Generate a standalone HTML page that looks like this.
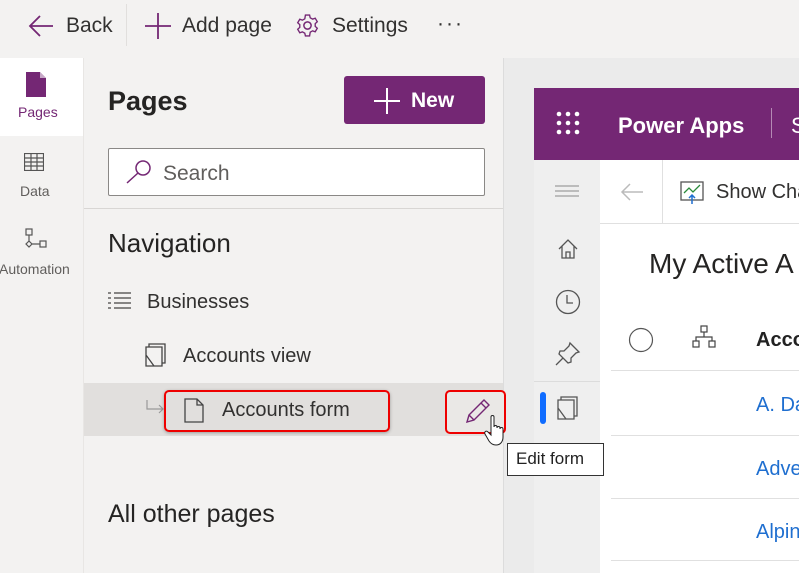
<!DOCTYPE html><html><head><style>
*{margin:0;padding:0;box-sizing:border-box}
body{width:799px;height:573px;overflow:hidden;background:#f3f2f1;font-family:"Liberation Sans",sans-serif;position:relative;color:#323130}
.a{position:absolute}
.t{font-size:21px;color:#323130;white-space:nowrap}
.z{z-index:5}
</style></head><body>
<!-- top bar -->
<div class="a" style="left:0;top:0;width:799px;height:58px;background:#f3f2f1"></div>
<svg class="a" style="left:28px;top:14px" width="26" height="24" viewBox="0 0 26 24"><path d="M25 12H3M12 2L2 12l10 10" stroke="#742774" stroke-width="1.8" fill="none"/></svg>
<div class="a t" style="left:66px;top:14px">Back</div>
<div class="a" style="left:126px;top:4px;width:1px;height:42px;background:#e1dfdd"></div>
<svg class="a" style="left:145px;top:13px" width="26" height="26"><path d="M13 0v26M0 13h26" stroke="#742774" stroke-width="1.8"/></svg>
<div class="a t" style="left:182px;top:14px">Add page</div>
<svg class="a" style="left:295px;top:13px" width="25" height="25" viewBox="0 0 24 24"><circle cx="12" cy="12" r="3.5" fill="none" stroke="#742774" stroke-width="1.4"/><path d="M10 2h4l.6 2.6 2.3 1.3 2.5-.9 2 3.4-2 1.8v2.6l2 1.8-2 3.4-2.5-.9-2.3 1.3L14 22h-4l-.6-2.6-2.3-1.3-2.5.9-2-3.4 2-1.8v-2.6l-2-1.8 2-3.4 2.5.9 2.3-1.3z" fill="none" stroke="#742774" stroke-width="1.3"/></svg>
<div class="a t" style="left:332px;top:14px">Settings</div>
<div class="a t" style="left:437px;top:12px;letter-spacing:2px">···</div>
<!-- left rail -->
<div class="a" style="left:0;top:58px;width:83px;height:78px;background:#fff"></div>
<svg class="a" style="left:26px;top:72px" width="20" height="25"><path d="M0 0h14l6 6v19H0z" fill="#742774"/><path d="M14 0v6h6" fill="#fff" opacity=".6"/></svg>
<div class="a" style="left:18px;top:104px;font-size:14px;color:#742774">Pages</div>
<svg class="a" style="left:24px;top:153px" width="20" height="18"><g stroke="#555" fill="none" stroke-width="1.2"><rect x=".5" y=".5" width="19" height="17"/><path d="M0 5h20M0 9h20M0 13h20M7 0v18M13 0v18"/></g></svg>
<div class="a" style="left:20px;top:183px;font-size:14px;color:#605e5c">Data</div>
<svg class="a" style="left:24px;top:228px" width="24" height="22"><g stroke="#555" fill="none" stroke-width="1.2"><rect x="2" y="1" width="6" height="6"/><path d="M5 7v6l3 3-3 3-3-3 3-3M8 16h8"/><rect x="16" y="13" width="6" height="6"/></g></svg>
<div class="a" style="left:-1px;top:261px;font-size:14px;color:#605e5c">Automation</div>
<!-- panel -->
<div class="a" style="left:83px;top:58px;width:1px;height:515px;background:#e8e6e4"></div>
<div class="a" style="left:108px;top:86px;font-size:27px;font-weight:bold;color:#252423">Pages</div>
<div class="a" style="left:344px;top:76px;width:141px;height:48px;background:#742774;border-radius:3px"></div>
<svg class="a" style="left:374px;top:88px" width="26" height="26"><path d="M13 0v26M0 13h26" stroke="#fff" stroke-width="2"/></svg>
<div class="a" style="left:411px;top:89px;font-size:21px;font-weight:bold;color:#fff">New</div>
<div class="a" style="left:108px;top:148px;width:377px;height:48px;background:#fff;border:1px solid #8a8886;border-radius:2px"></div>
<svg class="a" style="left:126px;top:160px" width="26" height="24"><circle cx="17" cy="8" r="7" fill="none" stroke="#742774" stroke-width="1.5"/><path d="M12 13L1 23" stroke="#742774" stroke-width="1.5"/></svg>
<div class="a t" style="left:163px;top:162px;color:#605e5c">Search</div>
<div class="a" style="left:84px;top:208px;width:419px;height:1px;background:#d8d6d4"></div>
<div class="a" style="left:108px;top:228px;font-size:26px;color:#252423">Navigation</div>
<svg class="a" style="left:108px;top:292px" width="24" height="18"><g stroke="#444" stroke-width="1.3"><path d="M0 1h3M0 6h3M0 11h3M0 16h3M6 1h17M6 6h17M6 11h17M6 16h17"/></g></svg>
<div class="a t" style="left:147px;top:291px;font-size:20px">Businesses</div>
<svg class="a" style="left:145px;top:343px" width="22" height="24"><g stroke="#444" fill="none" stroke-width="1.3"><path d="M4 4V1h16v19h-3"/><path d="M1 4h16v19H1zM1 12l8 11"/></g></svg>
<div class="a t" style="left:183px;top:345px;font-size:20px">Accounts view</div>
<div class="a" style="left:84px;top:383px;width:419px;height:53px;background:#e1dfdd"></div>
<svg class="a" style="left:146px;top:400px" width="20" height="16"><path d="M1 0v9h16M13 5l4 4-4 4" stroke="#999" fill="none" stroke-width="1.2"/></svg>
<div class="a" style="left:164px;top:390px;width:226px;height:42px;border:2px solid #e00;border-radius:5px;box-shadow:0 1px 3px rgba(0,0,0,.3)"></div>
<svg class="a" style="left:184px;top:398px" width="20" height="25"><path d="M1 1h12l6 6v17H1z M13 1v6h6" stroke="#444" fill="none" stroke-width="1.3"/></svg>
<div class="a t" style="left:222px;top:399px;font-size:20px">Accounts form</div>
<div class="a" style="left:108px;top:500px;font-size:25px;color:#252423">All other pages</div>
<!-- right preview -->
<div class="a" style="left:503px;top:58px;width:296px;height:515px;background:#ebebeb"></div>
<div class="a" style="left:503px;top:58px;width:1px;height:515px;background:#dcdcdc"></div>
<div class="a" style="left:534px;top:88px;width:265px;height:72px;background:#742774"></div>
<svg class="a" style="left:556px;top:111px" width="26" height="24"><g fill="#fff"><circle cx="3" cy="3" r="2.3"/><circle cx="12" cy="3" r="2.3"/><circle cx="21" cy="3" r="2.3"/><circle cx="3" cy="12" r="2.3"/><circle cx="12" cy="12" r="2.3"/><circle cx="21" cy="12" r="2.3"/><circle cx="3" cy="21" r="2.3"/><circle cx="12" cy="21" r="2.3"/><circle cx="21" cy="21" r="2.3"/></g></svg>
<div class="a" style="left:618px;top:113px;font-size:22px;font-weight:bold;color:#fff">Power Apps</div>
<div class="a" style="left:771px;top:108px;width:1px;height:30px;background:#b48ab4"></div>
<div class="a" style="left:791px;top:113px;font-size:22px;color:#fff">S</div>
<div class="a" style="left:534px;top:160px;width:66px;height:413px;background:#efefef"></div>
<div class="a" style="left:600px;top:160px;width:199px;height:413px;background:#fff"></div>
<div class="a" style="left:600px;top:223px;width:199px;height:1px;background:#e0e0e0"></div>
<div class="a" style="left:662px;top:160px;width:1px;height:63px;background:#e0e0e0"></div>
<svg class="a" style="left:555px;top:185px" width="24" height="12"><path d="M0 1h24M0 6h24M0 11h24" stroke="#888" stroke-width="1"/></svg>
<svg class="a" style="left:620px;top:182px" width="24" height="20"><path d="M23 10H2M10 2L2 10l8 8" stroke="#bbb" fill="none" stroke-width="1.5"/></svg>
<svg class="a" style="left:680px;top:181px" width="26" height="24"><rect x="1" y="1" width="22" height="18" fill="none" stroke="#555" stroke-width="1.3"/><path d="M4 12l5-5 4 4 7-7" stroke="#2a8a3a" fill="none" stroke-width="1.3"/><path d="M12 23v-9M9 17l3-3 3 3" stroke="#1f6fd0" fill="none" stroke-width="1.5"/></svg>
<div class="a t" style="left:716px;top:181px;font-size:20px">Show Cha</div>
<svg class="a" style="left:557px;top:238px" width="22" height="22"><path d="M2 11L11 2l9 9M5 8v12h12V8M9 20v-6h4v6" stroke="#555" fill="none" stroke-width="1.3"/></svg>
<svg class="a" style="left:555px;top:289px" width="26" height="26"><circle cx="13" cy="13" r="11.5" fill="none" stroke="#555" stroke-width="1.3"/><path d="M12 6v8h6" stroke="#555" fill="none" stroke-width="1.3"/></svg>
<svg class="a" style="left:555px;top:341px" width="26" height="26"><path d="M15 2l9 9-3 1-5 5 0 4-3 1-9-9 1-3 4 0 5-5zM8 17l-7 7" stroke="#555" fill="none" stroke-width="1.3"/></svg>
<div class="a" style="left:534px;top:381px;width:66px;height:1px;background:#dcdcdc"></div>
<div class="a" style="left:540px;top:392px;width:6px;height:32px;background:#0f6cff;border-radius:3px"></div>
<svg class="a" style="left:557px;top:396px" width="22" height="24"><g stroke="#555" fill="none" stroke-width="1.3"><path d="M4 4V1h16v19h-3"/><path d="M1 4h16v19H1zM1 12l8 11"/></g></svg>
<div class="a" style="left:649px;top:248px;font-size:28px;color:#252423">My Active A</div>
<svg class="a" style="left:628px;top:327px" width="26" height="26"><circle cx="13" cy="13" r="11.5" fill="none" stroke="#555" stroke-width="1.2"/></svg>
<svg class="a" style="left:692px;top:325px" width="25" height="24"><g stroke="#444" fill="none" stroke-width="1.2"><rect x="9" y="1" width="6" height="6"/><rect x="1" y="16" width="6" height="6"/><rect x="17" y="16" width="6" height="6"/><path d="M12 7v5M4 16v-4h16v4"/></g></svg>
<div class="a t" style="left:756px;top:329px;font-size:20px;font-weight:bold;color:#222">Acco</div>
<div class="a" style="left:611px;top:370px;width:188px;height:1px;background:#e0e0e0"></div>
<div class="a" style="left:611px;top:435px;width:188px;height:1px;background:#e0e0e0"></div>
<div class="a" style="left:611px;top:498px;width:188px;height:1px;background:#e0e0e0"></div>
<div class="a" style="left:611px;top:560px;width:188px;height:1px;background:#e0e0e0"></div>
<div class="a t" style="left:756px;top:394px;font-size:20px;color:#1f6fd0">A. Da</div>
<div class="a t" style="left:756px;top:458px;font-size:20px;color:#1f6fd0">Adve</div>
<div class="a t" style="left:756px;top:521px;font-size:20px;color:#1f6fd0">Alpin</div>
<!-- overlay -->
<div class="a z" style="left:445px;top:390px;width:61px;height:44px;border:2px solid #e00;border-radius:5px;background:#eae8e6"></div>
<svg class="a z" style="left:465px;top:398px" width="26" height="26"><path d="M2 24l2-7L19 2l5 5L9 22zM4 17l5 5M16 5l5 5" stroke="#742774" fill="none" stroke-width="1.4"/></svg>
<svg class="a z" style="left:484px;top:415px" width="22" height="34"><path d="M7 2c0-2 3-2 3 0v10c0-2 3-2 3 0v1c0-2 3-2 3 0v1c0-2 3-2 3 0v8c0 5-3 8-7 8-3 0-5-1-7-4L1 19c-1-2 1-4 3-2l3 3z" fill="#fff" stroke="#222" stroke-width="1"/></svg>
<div class="a z" style="left:507px;top:443px;width:97px;height:33px;background:#fff;border:1px solid #333;font-size:17px;padding:5px 0 0 8px;color:#222;white-space:nowrap">Edit form</div>
</body></html>
